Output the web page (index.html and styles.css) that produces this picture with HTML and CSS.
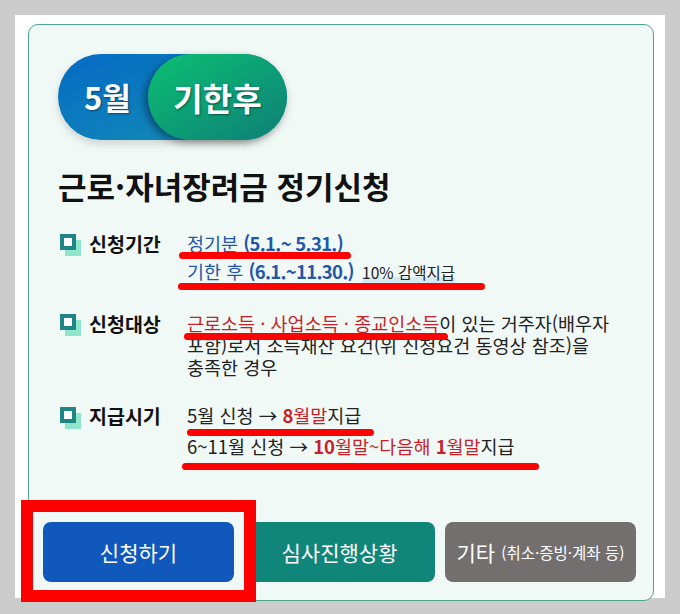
FILE: index.html
```html
<!DOCTYPE html>
<html lang="ko">
<head>
    <meta charset="UTF-8">
    <meta name="viewport" content="width=device-width, initial-scale=1.0">
    <title>근로·자녀장려금 정기신청</title>
    <link rel="stylesheet" href="styles.css">
</head>
<body>
    <div class="page">
        <div class="card">
            <div class="badge">
                <span class="badge-month">5월</span>
                <span class="badge-late">기한후</span>
            </div>

            <h2 class="title">근로·자녀장려금 정기신청</h2>

            <ul class="info">
                <li class="item item-period">
                    <div class="label"><span class="box"></span>신청기간</div>
                    <div class="value">
                        <p class="blue">정기분 <b>(5.1.~ 5.31.)</b></p>
                        <p><span class="blue">기한 후 <b>(6.1.~11.30.)</b></span> <span class="note">10% 감액지급</span></p>
                    </div>
                </li>
                <li class="item item-target">
                    <div class="label"><span class="box"></span>신청대상</div>
                    <div class="value">
                        <p><span class="red">근로소득 · 사업소득 · 종교인소득</span>이 있는 거주자(배우자<br>포함)로서 소득재산 요건(위 신청요건 동영상 참조)을<br>충족한 경우</p>
                    </div>
                </li>
                <li class="item item-pay">
                    <div class="label"><span class="box"></span>지급시기</div>
                    <div class="value">
                        <p>5월 신청 → <span class="red"><b>8</b>월말</span>지급</p>
                        <p>6~11월 신청 → <span class="red"><b>10</b>월말~다음해 <b>1</b>월말</span>지급</p>
                    </div>
                </li>
            </ul>

            <div class="buttons">
                <a href="#" class="btn btn-apply">신청하기</a>
                <a href="#" class="btn btn-status">심사진행상황</a>
                <a href="#" class="btn btn-etc">기타 <small>(취소·증빙·계좌 등)</small></a>
            </div>
        </div>
    </div>

    <!-- red marks drawn over the capture -->
    <div class="mark line1"></div>
    <div class="mark line2"></div>
    <div class="mark line3"></div>
    <div class="mark line4"></div>
    <div class="mark line5"></div>
    <div class="frame"></div>
</body>
</html>
```

FILE: styles.css
```css
body {
    margin: 0;
    padding: 15px;
    background-color: #cccccc;
    font-family: "Noto Sans CJK KR", "Noto Sans", sans-serif;
    color: #222;
}

.page {
    width: 650px;
    height: 583px;
    padding: 9px 12px 0 13px;
    box-sizing: border-box;
    background-color: #fff;
}

.card {
    display: flex;
    flex-direction: column;
    width: 626px;
    height: 577px;
    box-sizing: border-box;
    padding: 29px 0 18px 29px;
    border: 1px solid #4aa58c;
    border-radius: 10px;
    background-color: #f1f9f6;
}

/* pill badge */
.badge {
    display: flex;
    width: 229px;
    height: 86px;
    border-radius: 43px;
    background: linear-gradient(160deg, #046ac6 0%, #1690b2 100%);
    box-shadow: 0 4px 8px rgba(0, 0, 0, 0.15);
    color: #fff;
    font-weight: bold;
    font-size: 31px;
    text-shadow: 1px 1px 2px rgba(0, 0, 0, 0.45);
}

.badge-month {
    width: 90px;
    box-sizing: border-box;
    padding-left: 26px;
    line-height: 86px;
}

.badge-late {
    width: 139px;
    border-radius: 43px;
    background: linear-gradient(150deg, #0bbf72 0%, #0e7f78 100%);
    box-shadow: -4px 3px 7px rgba(0, 0, 0, 0.35);
    text-align: center;
    line-height: 86px;
    font-size: 32px;
}

.title {
    margin: 26px 0 0;
    font-size: 31px;
    line-height: 40px;
    font-weight: bold;
    color: #111;
}

/* info list */
.info {
    list-style: none;
    margin: 23px 0 0;
    padding: 0 0 0 2px;
}

.item {
    display: flex;
}

.item p {
    margin: 0;
}

.label {
    display: flex;
    align-items: center;
    width: 127px;
    height: 28px;
    font-size: 19.5px;
    font-weight: bold;
    color: #111;
    flex-shrink: 0;
}

.box {
    width: 16px;
    height: 16px;
    box-sizing: border-box;
    border: 4px solid #1f8585;
    background-color: #fff;
    box-shadow: 5px 6px 0 #8fe6cc;
    margin: -2px 13px 0 0;
}

.value {
    font-size: 18.5px;
}

.item-period .value {
    line-height: 28px;
}

.item-target {
    margin-top: 26px;
}

.item-target .value {
    line-height: 22px;
}

.item-target .label {
    height: 22px;
}

.item-pay {
    margin-top: 22px;
}

.item-pay .value {
    line-height: 31px;
}

.item-pay .label {
    height: 31px;
}

.blue {
    color: #2456a8;
}

.blue b {
    letter-spacing: -0.7px;
}

.red {
    color: #c81f28;
}

.note {
    font-size: 15.5px;
    color: #222;
    margin-left: 3px;
    background: linear-gradient(transparent 74%, #d3eaf3 74%);
}

/* buttons */
.buttons {
    display: flex;
    gap: 10px;
    margin-top: auto;
    margin-left: -15px;
}

.btn {
    display: flex;
    align-items: center;
    justify-content: center;
    width: 191px;
    height: 60px;
    border-radius: 8px;
    color: #fff;
    font-size: 21px;
    text-decoration: none;
}

.btn small {
    font-size: 15.5px;
    margin-left: 6px;
}

.btn-apply {
    background-color: #1058bb;
}

.btn-status {
    background-color: #10857a;
}

.btn-etc {
    background-color: #746f6f;
}

/* red annotations */
.mark {
    position: absolute;
    height: 7px;
    border-radius: 4px;
    background-color: #ff0000;
}

.line1 { left: 179px; top: 252px; width: 172px; }
.line2 { left: 178px; top: 283px; width: 307px; }
.line3 { left: 184px; top: 333px; width: 264px; }
.line4 { left: 187px; top: 429px; width: 187px; }
.line5 { left: 182px; top: 463px; width: 357px; }

.frame {
    position: absolute;
    left: 21px;
    top: 500px;
    width: 235px;
    height: 102px;
    box-sizing: border-box;
    border: 12px solid #ff0000;
}
```
